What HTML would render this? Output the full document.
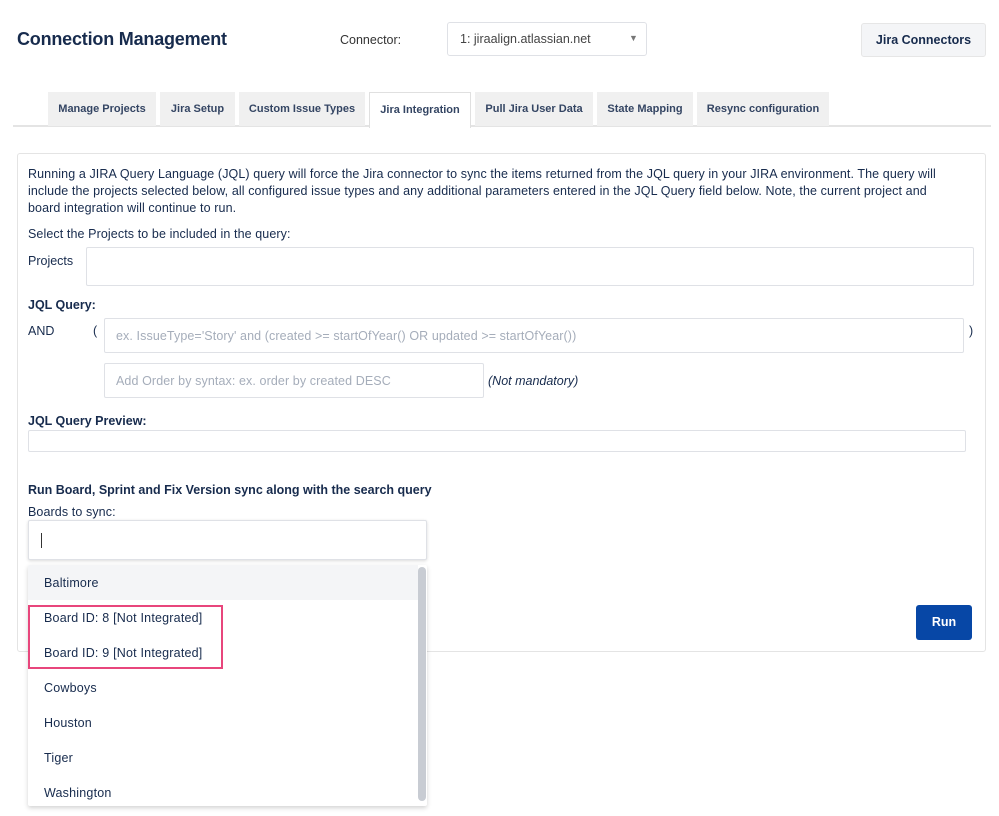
<!DOCTYPE html>
<html><head><meta charset="utf-8"><style>
*{box-sizing:border-box;margin:0;padding:0}
body{width:999px;height:816px;background:#fff;font-family:"Liberation Sans",sans-serif;color:#172b4d;position:relative;overflow:hidden}
.a{position:absolute;white-space:nowrap}
.t{font-size:12.5px;color:#172b4d}
.b{font-weight:bold;font-size:12.5px}
.tab{position:absolute;top:92px;height:34px;background:#f0f0f0;font-size:11px;font-weight:bold;color:#344563;text-align:center;line-height:35px}
.in{position:absolute;border:1px solid #dfe1e6;background:#fff;border-radius:2px}
.ph{color:#a5adba;font-size:12.5px;position:absolute;left:11px;top:10px;white-space:nowrap}
.it{position:absolute;left:16px;font-size:12.5px;color:#172b4d;letter-spacing:0.2px}
</style></head><body>
<div class="a" style="left:17px;top:29px;font-size:18px;font-weight:bold;color:#172b4d;letter-spacing:-0.2px">Connection Management</div>
<div class="a" style="left:340px;top:33px;font-size:12.5px;color:#333">Connector:</div>
<div class="in" style="left:447px;top:22px;width:200px;height:34px;border-radius:3px"><span class="a" style="left:12px;top:9px;font-size:12.5px;color:#444">1: jiraalign.atlassian.net</span><span class="a" style="left:181px;top:10px;font-size:9px;color:#777">▼</span></div>
<div class="a" style="left:861px;top:23px;width:125px;height:34px;background:#f4f5f7;border:1px solid #e6e6e6;border-radius:3px;text-align:center;line-height:32px;font-size:12.5px;font-weight:bold;color:#172b4d">Jira Connectors</div>
<div class="a" style="left:13px;top:125px;width:978px;height:2px;background:#e4e4e4"></div>
<div class="tab" style="left:48px;width:108px">Manage Projects</div>
<div class="tab" style="left:160px;width:75px">Jira Setup</div>
<div class="tab" style="left:239px;width:126px">Custom Issue Types</div>
<div class="tab" style="left:369px;width:102px;height:36px;background:#fff;border:1px solid #e0e0e0;border-bottom:none">Jira Integration</div>
<div class="tab" style="left:475px;width:118px">Pull Jira User Data</div>
<div class="tab" style="left:597px;width:96px">State Mapping</div>
<div class="tab" style="left:697px;width:132px">Resync configuration</div>

<div class="a" style="left:17px;top:153px;width:969px;height:499px;border:1px solid #e4e4e4;border-radius:3px"></div>
<div class="a t" style="left:28px;top:166px;line-height:17px;letter-spacing:0.1px">Running a JIRA Query Language (JQL) query will force the Jira connector to sync the items returned from the JQL query in your JIRA environment. The query will<br>include the projects selected below, all configured issue types and any additional parameters entered in the JQL Query field below. Note, the current project and<br>board integration will continue to run.</div>
<div class="a t" style="left:28px;top:227px;letter-spacing:0.1px">Select the Projects to be included in the query:</div>
<div class="a t" style="left:28px;top:254px">Projects</div>
<div class="in" style="left:86px;top:247px;width:888px;height:39px"></div>
<div class="a b" style="left:28px;top:298px">JQL Query:</div>
<div class="a t" style="left:28px;top:324px">AND</div>
<div class="a t" style="left:93px;top:324px">(</div>
<div class="in" style="left:104px;top:318px;width:860px;height:35px"><span class="ph" style="letter-spacing:0.1px">ex. IssueType='Story' and (created &gt;= startOfYear() OR updated &gt;= startOfYear())</span></div>
<div class="a t" style="left:969px;top:324px">)</div>
<div class="in" style="left:104px;top:363px;width:380px;height:35px"><span class="ph" style="letter-spacing:0.1px">Add Order by syntax: ex. order by created DESC</span></div>
<div class="a t" style="left:488px;top:374px;font-style:italic">(Not mandatory)</div>
<div class="a b" style="left:28px;top:414px">JQL Query Preview:</div>
<div class="in" style="left:28px;top:430px;width:938px;height:22px"></div>
<div class="a b" style="left:28px;top:483px">Run Board, Sprint and Fix Version sync along with the search query</div>
<div class="a t" style="left:28px;top:505px;letter-spacing:0.1px">Boards to sync:</div>
<div class="in" style="left:28px;top:520px;width:399px;height:40px;box-shadow:0 1px 3px rgba(0,0,0,.15)"><span class="a" style="left:12px;top:12px;width:1px;height:15px;background:#333"></span></div>
<div class="a" style="left:916px;top:605px;width:56px;height:35px;background:#0747a6;border-radius:3px;color:#fff;font-weight:bold;font-size:12.5px;text-align:center;line-height:35px">Run</div>

<div class="a" style="left:28px;top:565px;width:399px;height:241px;background:#fff;box-shadow:0 2px 5px rgba(0,0,0,.18);border-radius:2px;overflow:hidden">
<div class="a" style="left:0;top:0;width:390px;height:35px;background:#f4f5f7"></div>
<div class="it" style="top:11px">Baltimore</div>
<div class="it" style="top:46px">Board ID: 8 [Not Integrated]</div>
<div class="it" style="top:81px">Board ID: 9 [Not Integrated]</div>
<div class="it" style="top:116px">Cowboys</div>
<div class="it" style="top:151px">Houston</div>
<div class="it" style="top:186px">Tiger</div>
<div class="it" style="top:221px">Washington</div>
<div class="a" style="left:390px;top:2px;width:8px;height:234px;background:#c8ccd3;border-radius:4px"></div>
</div>
<div class="a" style="left:28px;top:605px;width:195px;height:64px;border:2px solid #e8467c"></div>
</body></html>
